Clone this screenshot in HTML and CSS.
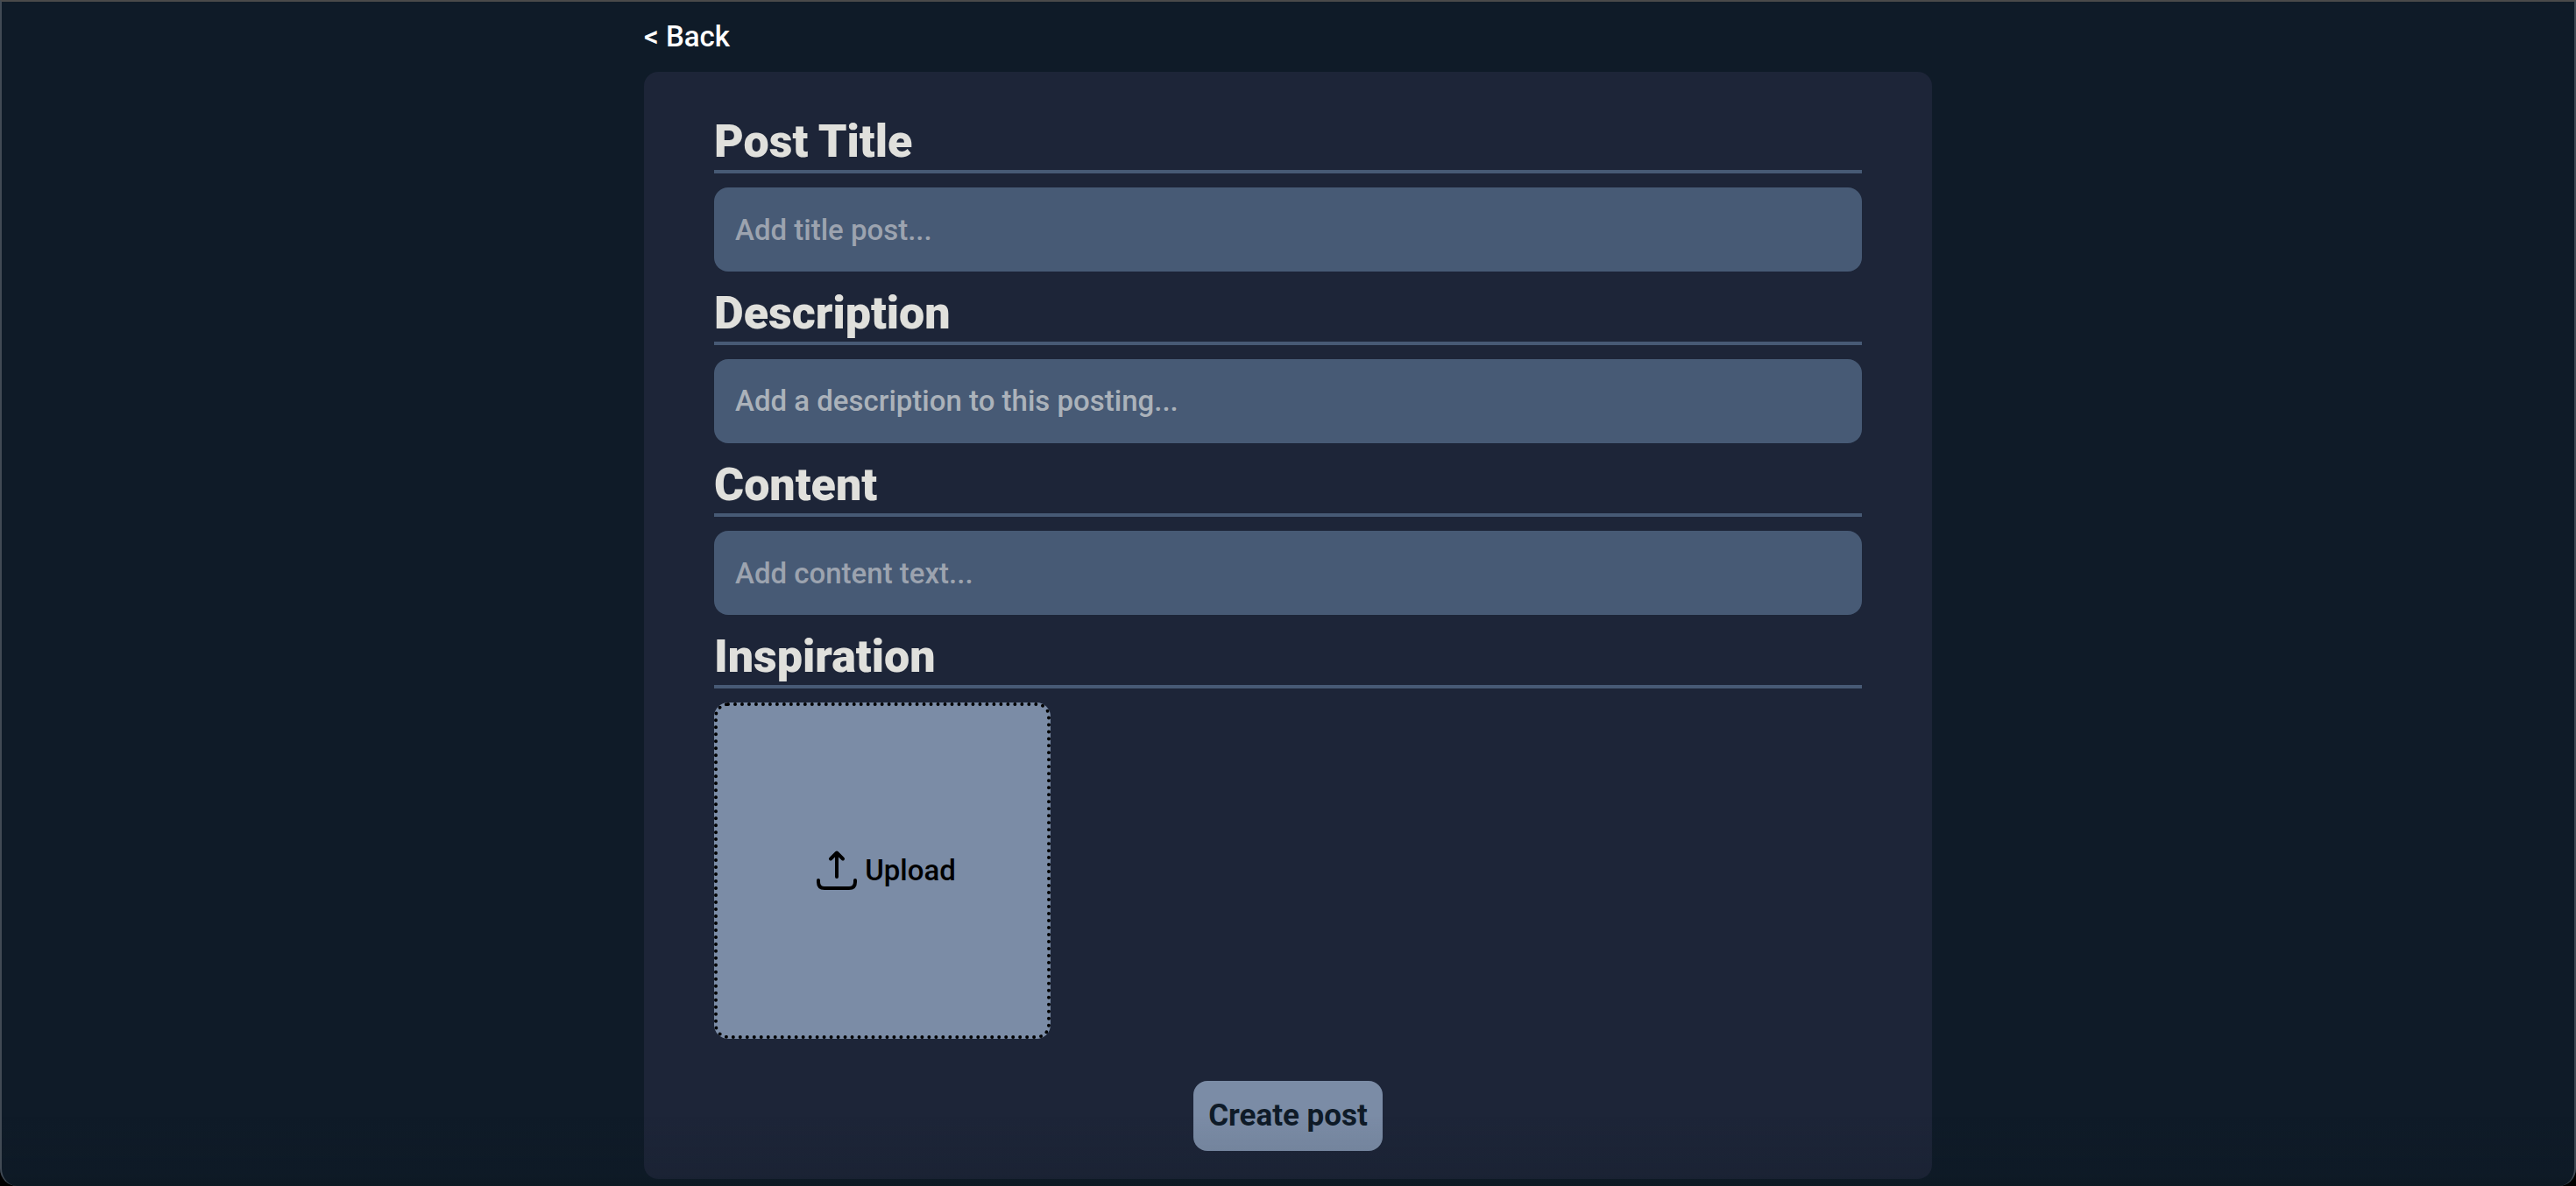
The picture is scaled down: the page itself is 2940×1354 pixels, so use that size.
FILE: index.html
```html
<!DOCTYPE html>
<html lang="en">
<head>
<meta charset="utf-8">
<title>Create post</title>
<meta name="viewport" content="width=device-width, initial-scale=1">
<link rel="stylesheet" href="styles.css">
</head>
<body>
<main class="page">
  <a class="back" href="#">&lt; Back</a>
  <form class="card">
    <div class="field">
      <label class="heading" for="title">Post Title</label>
      <input class="input" id="title" type="text" placeholder="Add title post...">
    </div>
    <div class="field">
      <label class="heading" for="description">Description</label>
      <textarea class="input input-area" id="description" rows="1" placeholder="Add a description to this posting..."></textarea>
    </div>
    <div class="field">
      <label class="heading" for="content">Content</label>
      <input class="input" id="content" type="text" placeholder="Add content text...">
    </div>
    <div class="field">
      <h2 class="heading">Inspiration</h2>
      <button class="upload" type="button">
        <svg class="upload-icon" viewBox="0 0 48 48" aria-hidden="true">
          <path d="M24 31V4M17 10.500L24 3.500L31 10.500M3 35V37Q3 44 10 44H38Q45 44 45 37V35"/>
        </svg>
        <span>Upload</span>
      </button>
    </div>
    <button class="submit" type="submit">Create post</button>
  </form>
</main>
</body>
</html>
```
FILE: styles.css
```css
* {
  box-sizing: border-box;
}

html {
  background: #000;
}

body {
  margin: 0;
  min-height: 100vh;
  background: #0f1b28;
  border-radius: 0 0 20px 20px;
  color: #fff;
  font-family: Roboto, "Liberation Sans", sans-serif;
  font-size: 33px;
  font-weight: 500;
  line-height: 40px;
}

/* Thin window frame and the shade along the bottom edge */
body::after {
  content: "";
  position: fixed;
  inset: 0;
  border: 2px solid #414a54;
  border-top-color: #4a4a4a;
  border-bottom: 0;
  border-radius: 0 0 20px 20px;
  background: linear-gradient(to top, rgba(10, 20, 24, 0.3), rgba(10, 20, 24, 0.1) 12px, rgba(10, 20, 24, 0) 80px);
  pointer-events: none;
}

.page {
  display: flex;
  flex-direction: column;
  align-items: flex-start;
  width: 50%;
  margin: 0 auto;
  padding: 22px 0 8px;
  gap: 20px;
}

.back {
  color: #fff;
  text-decoration: none;
}

.card {
  display: flex;
  flex-direction: column;
  gap: 16px;
  width: 100%;
  padding: 48px 80px 32px;
  background: #1d2538;
  border-radius: 16px;
}

.field {
  display: flex;
  flex-direction: column;
  gap: 16px;
}

.heading {
  margin: 0;
  padding: 2px 0;
  border-bottom: 4px solid #475a75;
  color: #e0e0dc;
  font-size: 52px;
  font-weight: 900;
  line-height: 60px;
}

.input {
  width: 100%;
  height: 96px;
  padding: 0 24px;
  border: 0;
  border-radius: 16px;
  background: #475a75;
  color: #e0e0dc;
  font: inherit;
}

.input-area {
  display: block;
  padding: 28px 24px;
  overflow: hidden;
  resize: none;
}

.input::placeholder {
  color: #9ca3af;
  opacity: 1;
}

.input-area::placeholder {
  color: #abb2ba;
}

.upload {
  display: flex;
  align-items: center;
  justify-content: center;
  gap: 8px;
  width: 384px;
  height: 384px;
  padding: 0 0 0 8px;
  border: 4px dotted #000;
  border-radius: 16px;
  background: #7b8ca6;
  color: #000;
  font: inherit;
}

.upload-icon {
  width: 48px;
  height: 48px;
  fill: none;
  stroke: #000;
  stroke-width: 4;
  stroke-linecap: round;
  stroke-linejoin: round;
}

.submit {
  align-self: center;
  min-width: 216px;
  height: 80px;
  margin-top: 32px;
  padding: 0 8px;
  border: 0;
  border-radius: 16px;
  background: #7b8ca6;
  color: #0f1b28;
  font: inherit;
  font-size: 35px;
  font-weight: 700;
}
```
